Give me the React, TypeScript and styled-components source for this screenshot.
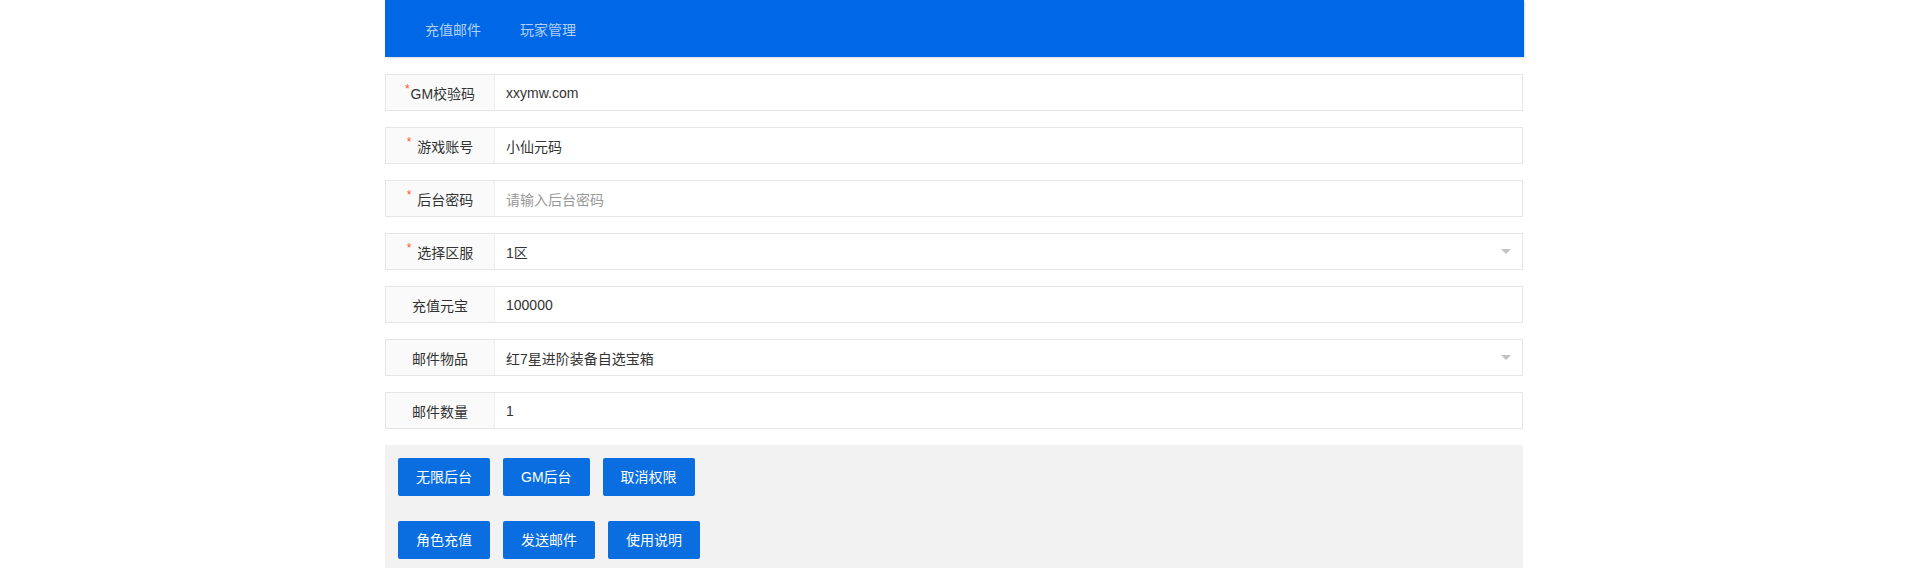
import styled, { createGlobalStyle } from "styled-components";

const GlobalStyle = createGlobalStyle`
    body {
        margin: 0;
        background: #fff;
        font-family: "Liberation Sans", "Noto Sans CJK SC", sans-serif;
        font-size: 14px;
        color: #333;
    }
`;

const Wrapper = styled.div`
    width: 1139px;
    margin-left: 385px;
`;

const Header = styled.div`
    height: 57px;
    background: #0068e6;
    display: flex;
    align-items: center;
    padding-left: 40px;
    gap: 39px;
    box-shadow: 1px 1px 2px rgba(0, 0, 0, 0.15);
`;

const NavItem = styled.a`
    color: rgba(255, 255, 255, 0.7);
    font-size: 14px;
    text-decoration: none;
`;

const Form = styled.div`
    display: flex;
    flex-direction: column;
    gap: 16px;
    padding-top: 17px;
    width: 1138px;
`;

const Row = styled.div`
    display: flex;
    height: 35px;
    border: 1px solid #e6e6e6;
    background: #fff;
`;

const Label = styled.div`
    width: 108px;
    flex-shrink: 0;
    background: #fafafa;
    border-right: 1px solid #eee;
    display: flex;
    align-items: center;
    justify-content: center;
    color: #333;
`;

const Star = styled.span<{ $tight?: boolean }>`
    color: #ff5722;
    font-size: 12px;
    align-self: flex-start;
    margin-top: 7px;
    margin-right: ${(p) => (p.$tight ? "1px" : "6px")};
`;

const Value = styled.div<{ $placeholder?: boolean }>`
    flex: 1;
    display: flex;
    align-items: center;
    padding-left: 11px;
    color: ${(p) => (p.$placeholder ? "#999" : "#333")};
    position: relative;
`;

const Arrow = styled.i`
    position: absolute;
    right: 11px;
    top: 15px;
    width: 0;
    height: 0;
    border-left: 5px solid transparent;
    border-right: 5px solid transparent;
    border-top: 5px solid #c2c2c2;
`;

const ButtonPanel = styled.div`
    margin-top: 16px;
    width: 1138px;
    background: #f2f2f2;
    padding: 13px 13px 9px;
    box-sizing: border-box;
    display: flex;
    flex-direction: column;
    gap: 25px;
`;

const ButtonRow = styled.div`
    display: flex;
    gap: 13px;
`;

const Button = styled.button`
    height: 38px;
    line-height: 38px;
    padding: 0 18px;
    border: 0;
    border-radius: 2px;
    background: #0a6ee0;
    color: #fff;
    font-family: inherit;
    font-size: 14px;
    cursor: pointer;
`;

type Field = {
    label: string;
    value: string;
    required?: boolean;
    tight?: boolean;
    placeholder?: boolean;
    select?: boolean;
};

const fields: Field[] = [
    { label: "GM校验码", value: "xxymw.com", required: true, tight: true },
    { label: "游戏账号", value: "小仙元码", required: true },
    { label: "后台密码", value: "请输入后台密码", required: true, placeholder: true },
    { label: "选择区服", value: "1区", required: true, select: true },
    { label: "充值元宝", value: "100000" },
    { label: "邮件物品", value: "红7星进阶装备自选宝箱", select: true },
    { label: "邮件数量", value: "1" },
];

export default function App() {
    return (
        <>
            <GlobalStyle />
            <Wrapper>
                <Header>
                    <NavItem>充值邮件</NavItem>
                    <NavItem>玩家管理</NavItem>
                </Header>
                <Form>
                    {fields.map((f) => (
                        <Row key={f.label}>
                            <Label>
                                {f.required && <Star $tight={f.tight}>*</Star>}
                                {f.label}
                            </Label>
                            <Value $placeholder={f.placeholder}>
                                {f.value}
                                {f.select && <Arrow />}
                            </Value>
                        </Row>
                    ))}
                </Form>
                <ButtonPanel>
                    <ButtonRow>
                        <Button>无限后台</Button>
                        <Button>GM后台</Button>
                        <Button>取消权限</Button>
                    </ButtonRow>
                    <ButtonRow>
                        <Button>角色充值</Button>
                        <Button>发送邮件</Button>
                        <Button>使用说明</Button>
                    </ButtonRow>
                </ButtonPanel>
            </Wrapper>
        </>
    );
}
